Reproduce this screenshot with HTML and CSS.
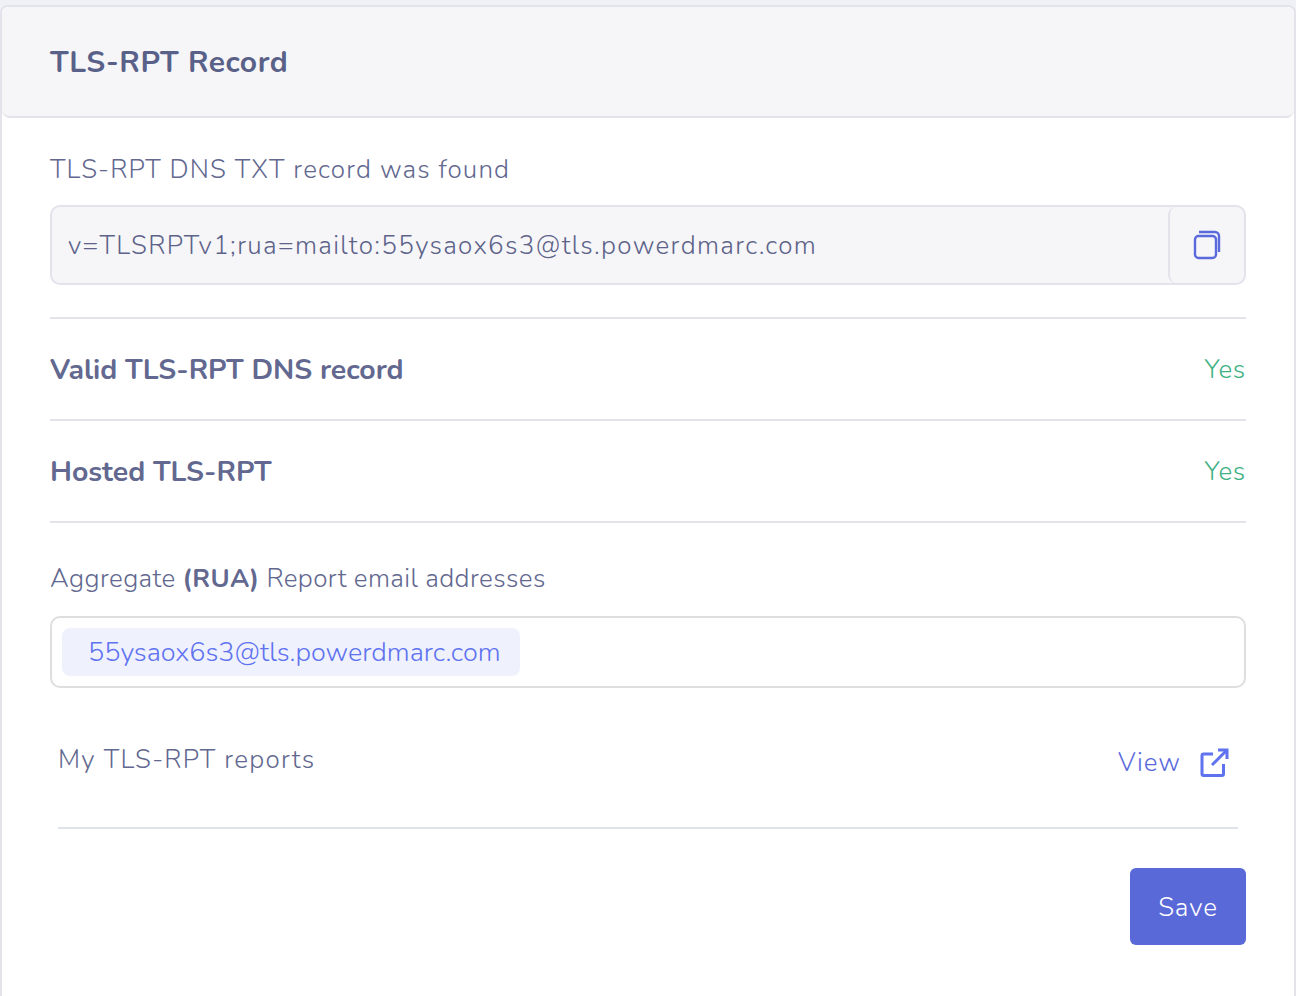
FILE: index.html
```html
<!DOCTYPE html>
<html lang="en">
<head>
    <meta charset="UTF-8">
    <title>TLS-RPT Record</title>
    <link rel="stylesheet" href="styles.css">
</head>
<body>

<div class="card">
    <div class="card-header">
        <h1>TLS-RPT Record</h1>
    </div>
    <div class="card-body">
        <p class="field-label first">TLS-RPT DNS TXT record was found</p>
        <div class="record-box">
            <span class="record-value">v=TLSRPTv1;rua=mailto:55ysaox6s3@tls.powerdmarc.com</span>
            <button class="copy-button" aria-label="Copy">
                <svg width="28" height="30" viewBox="0 0 28 30" fill="none" stroke="#5a69dc" stroke-width="2.4">
                    <rect x="2" y="6" width="21" height="22" rx="3.5"/>
                    <path d="M6 2h16a4 4 0 0 1 4 4V22"/>
                </svg>
            </button>
        </div>
        <div class="status-row top">
            <strong>Valid TLS-RPT DNS record</strong>
            <span class="status-yes">Yes</span>
        </div>
        <div class="status-row">
            <strong>Hosted TLS-RPT</strong>
            <span class="status-yes">Yes</span>
        </div>
        <p class="field-label aggregate">Aggregate <b>(RUA)</b> Report email addresses</p>
        <div class="tag-box">
            <span class="tag">55ysaox6s3@tls.powerdmarc.com</span>
        </div>
        <div class="reports-row">
            <span class="reports-label">My TLS-RPT reports</span>
            <a class="view-link" href="#">View
                <svg class="view-icon" width="30" height="30" viewBox="0 0 30 30" fill="none" stroke="#5f73f0" stroke-width="3">
                    <path d="M14 6H4.500A1.500 1.500 0 0 0 3 7.500V26a1.500 1.500 0 0 0 1.500 1.500H23a1.500 1.500 0 0 0 1.500-1.500V16"/>
                    <path d="M13 17L28 2"/>
                    <path d="M19 2h9v9"/>
                </svg>
            </a>
        </div>
        <div class="actions">
            <button class="save-button">Save</button>
        </div>
    </div>
</div>

</body>
</html>
```

FILE: styles.css
```css
body {
    font-family: "Nunito", "Lato", "Liberation Sans", sans-serif;
    margin: 0;
    padding: 5px 0 0;
    background-color: #f0f1f7;
    color: #62688f;
}
.card {
    background-color: white;
    border: 2px solid #e3e3ec;
    border-bottom: none;
    border-radius: 8px 8px 0 0;
    height: 991px;
    box-sizing: border-box;
}
.card-header {
    background-color: #f6f6f9;
    border-bottom: 2px solid #e3e3ec;
    border-radius: 8px;
    height: 111px;
    box-sizing: border-box;
    padding: 2px 0 0 48px;
    display: flex;
    align-items: center;
}
.card-header h1 {
    margin: 0;
    font-size: 30px;
    font-weight: 700;
    letter-spacing: 0.55px;
    color: #5a6188;
}
.card-body {
    padding: 0 48px;
}
.field-label {
    margin: 0;
    padding: 40px 0 21px;
    font-size: 26px;
    line-height: 32px;
    font-weight: 300;
    letter-spacing: 1.14px;
    color: #62688f;
}
.field-label.first {
    padding-top: 36px;
    padding-bottom: 19px;
}
.field-label.aggregate {
    letter-spacing: 0.4px;
}
.field-label b {
    font-weight: 700;
}
.record-box {
    display: flex;
    height: 80px;
    box-sizing: border-box;
    background-color: #f6f6f9;
    border: 2px solid #e3e3ec;
    border-radius: 10px;
}
.record-value {
    flex: 1;
    padding-left: 16px;
    font-size: 26px;
    font-weight: 300;
    letter-spacing: 1.33px;
    line-height: 78px;
    color: #5d6389;
}
.copy-button {
    width: 76px;
    background: none;
    border: none;
    border-left: 2px solid #e3e3ec;
    border-radius: 8px;
    padding: 0;
    display: flex;
    align-items: center;
    justify-content: center;
}
.status-row {
    display: flex;
    justify-content: space-between;
    align-items: center;
    height: 102px;
    box-sizing: border-box;
    border-bottom: 2px solid #e3e3ec;
}
.status-row.top {
    margin-top: 32px;
    height: 104px;
    border-top: 2px solid #e3e3ec;
}
.status-row strong {
    font-size: 28.4px;
}
.status-yes {
    font-size: 26px;
    font-weight: 300;
    letter-spacing: 0.7px;
    color: #3fb183;
}
.tag-box {
    height: 72px;
    box-sizing: border-box;
    border: 2px solid #dedede;
    border-radius: 10px;
    padding: 10px;
}
.tag {
    display: inline-block;
    height: 48px;
    line-height: 50px;
    padding: 0 19px 0 26px;
    background-color: #eff1fd;
    border-radius: 8px;
    font-size: 27px;
    font-weight: 300;
    color: #5f73f0;
}
.reports-row {
    display: flex;
    justify-content: space-between;
    margin: 0 8px;
    height: 141px;
    box-sizing: border-box;
    padding: 54px 9px 0 0;
    border-bottom: 2px solid #e0e3e8;
}
.reports-label {
    font-size: 26px;
    font-weight: 300;
    letter-spacing: 1.27px;
    line-height: 36px;
    color: #62688f;
}
.view-link {
    display: flex;
    gap: 18px;
    height: 36px;
    align-items: center;
    margin-top: 2px;
    font-size: 26px;
    font-weight: 300;
    letter-spacing: 1px;
    color: #5a69dc;
    text-decoration: none;
}
.view-icon {
    margin-top: 2px;
}
.actions {
    display: flex;
    justify-content: flex-end;
    padding-top: 39px;
}
.save-button {
    width: 116px;
    height: 77px;
    background-color: #5a69d8;
    color: white;
    border: none;
    border-radius: 6px;
    font-family: inherit;
    font-size: 26px;
    font-weight: 300;
    letter-spacing: 0.9px;
    padding-top: 2px;
}
```
